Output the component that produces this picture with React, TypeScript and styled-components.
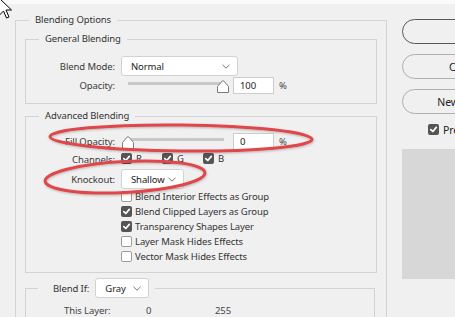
import React from 'react'
import styled, { createGlobalStyle } from 'styled-components'

const GlobalStyle = createGlobalStyle`
    html, body {
        margin: 0;
        padding: 0;
        background: #f0f0f0;
    }
    body {
        font-family: "Noto Sans", "Open Sans", sans-serif;
        font-size: 9.5px;
        letter-spacing: -0.1px;
        color: #303030;
        overflow: hidden;
    }
`

const Checkbox = ({ checked }: { checked?: boolean }) => (
    <Box checked={checked}>
        {checked && (
            <svg width="9" height="9" viewBox="0 0 9 9">
                <path d="M1.8 4.6 L3.8 6.5 L7.3 2.4" fill="none" stroke="#fff" strokeWidth="1.7" strokeLinecap="round" strokeLinejoin="round" />
            </svg>
        )}
    </Box>
)

const Chevron = () => (
    <svg width="8" height="5" viewBox="0 0 8 5">
        <path d="M0.5 0.8 L4 4.2 L7.5 0.8" fill="none" stroke="#777" strokeWidth="1" />
    </svg>
)

const Dropdown = ({ value, width }: { value: string; width: number }) => (
    <Select width={width}>
        <span>{value}</span>
        <Chevron />
    </Select>
)

const Slider = ({ value }: { value: number }) => (
    <SliderField>
        <SliderWrap>
            <Track />
            <Thumb style={{ left: 1 + value * 0.95 }} width="12" height="13" viewBox="0 0 12 13">
                <path d="M0.5 12.5 V6.5 L5.2 1 Q6 0.3 6.8 1 L11.5 6.5 V12.5 Z" fill="#fff" stroke="#7a7a7a" strokeWidth="1" />
            </Thumb>
        </SliderWrap>
        <NumberBox>{value}</NumberBox>
        <Unit>%</Unit>
    </SliderField>
)

const BlendingOptions: React.FC = () => {
    const toggles = [
        { label: 'Blend Interior Effects as Group', checked: false },
        { label: 'Blend Clipped Layers as Group', checked: true },
        { label: 'Transparency Shapes Layer', checked: true },
        { label: 'Layer Mask Hides Effects', checked: false },
        { label: 'Vector Mask Hides Effects', checked: false },
    ]

    return (
        <Page>
            <GlobalStyle />
            <TitleStrip />
            <Main>
                <Options>
                    <OuterLegend>Blending Options</OuterLegend>

                    <Group>
                        <GroupLegend>General Blending</GroupLegend>
                        <FormGrid top={9} bottom={9}>
                            <Label>Blend Mode:</Label>
                            <Dropdown value="Normal" width={117} />
                            <Label>Opacity:</Label>
                            <Slider value={100} />
                        </FormGrid>
                    </Group>

                    <Group gap={4}>
                        <GroupLegend>Advanced Blending</GroupLegend>
                        <FormGrid top={9} bottom={8}>
                            <Label>Fill Opacity:</Label>
                            <Slider value={0} />
                            <Label>Channels:</Label>
                            <Channels>
                                {['R', 'G', 'B'].map(c => (
                                    <Channel key={c}>
                                        <Checkbox checked />
                                        <span>{c}</span>
                                    </Channel>
                                ))}
                            </Channels>
                            <Label>Knockout:</Label>
                            <Dropdown value="Shallow" width={63} />
                            <ToggleList>
                                {toggles.map(t => (
                                    <ToggleRow key={t.label}>
                                        <Checkbox checked={t.checked} />
                                        <span>{t.label}</span>
                                    </ToggleRow>
                                ))}
                            </ToggleList>
                        </FormGrid>
                    </Group>

                    <Group gap={5} narrow>
                        <BlendIfLegend>
                            <span>Blend If:</span>
                            <Dropdown value="Gray" width={54} />
                        </BlendIfLegend>
                        <LayerRow>
                            <LayerLabel>This Layer:</LayerLabel>
                            <LayerValue>0</LayerValue>
                            <span>255</span>
                        </LayerRow>
                    </Group>
                </Options>

                <Side>
                    <PillButton primary>OK</PillButton>
                    <PillButton>Cancel</PillButton>
                    <PillButton>New Style...</PillButton>
                    <PreviewToggle>
                        <Checkbox checked />
                        <span>Preview</span>
                    </PreviewToggle>
                    <PreviewBox />
                </Side>
            </Main>

            <Marks width="455" height="317" viewBox="0 0 455 317">
                <defs>
                    <filter id="soft" x="-10%" y="-50%" width="120%" height="200%">
                        <feDropShadow dx="0.5" dy="1" stdDeviation="1" floodColor="#000" floodOpacity="0.25" />
                    </filter>
                </defs>
                <g filter="url(#soft)" fill="none" stroke="#e0474b" strokeWidth="3">
                    <ellipse cx="181" cy="138" rx="131" ry="13" transform="rotate(0.6 181 138)" />
                    <ellipse cx="125" cy="177" rx="80" ry="15.5" transform="rotate(-3 125 177)" />
                </g>
            </Marks>

            <Cursor width="16" height="24" viewBox="0 0 16 24">
                <path d="M0.5 0.5 V17 L4.5 13 L7.5 20 L10 19 L7 12 H12.5 Z" fill="#fff" stroke="#000" strokeWidth="1" strokeLinejoin="miter" />
            </Cursor>
        </Page>
    )
}

const Page = styled.div`
    position: relative;
    width: 455px;
    height: 317px;
    overflow: hidden;
`

const TitleStrip = styled.div`
    height: 4px;
    background: #fafafa;
`

const Main = styled.div`
    display: flex;
    gap: 15px;
    padding: 8px 0 0 15px;
`

const Options = styled.fieldset`
    width: 352px;
    min-height: 400px;
    flex-shrink: 0;
    margin: 0;
    padding: 3px 9px 0;
    border: 1px solid #d3d3d3;
`

const OuterLegend = styled.legend`
    margin-left: 4px;
    padding: 0 6px;
    line-height: 16px;
    color: #333;
`

const Group = styled.fieldset<{ gap?: number; narrow?: boolean }>`
    margin: ${p => p.gap || 0}px ${p => (p.narrow ? 2 : 0)}px 0 0;
    padding: 0;
    border: 1px solid #d3d3d3;
`

const GroupLegend = styled.legend`
    margin-left: 13px;
    padding: 0 6px;
    line-height: 16px;
    color: #333;
`

const FormGrid = styled.div<{ top: number; bottom: number }>`
    display: grid;
    grid-template-columns: 89px 1fr;
    column-gap: 6px;
    align-items: center;
    padding: ${p => p.top}px 0 ${p => p.bottom}px;
`

const Label = styled.div`
    text-align: right;
    color: #3a3a3a;
    line-height: 17px;
`

const Select = styled.div<{ width: number }>`
    width: ${p => p.width}px;
    height: 20px;
    box-sizing: border-box;
    display: flex;
    align-items: center;
    justify-content: space-between;
    padding: 0 7px 0 9px;
    background: #fff;
    border: 1px solid #d2d2d2;
    border-radius: 3px;
    color: #222;
    margin-bottom: 1px;
`

const SliderField = styled.div`
    display: flex;
    align-items: center;
    height: 17px;
`

const SliderWrap = styled.div`
    position: relative;
    width: 108px;
    height: 17px;
    margin-right: 4px;
`

const Track = styled.div`
    margin: 5px 0 0 7px;
    width: 96px;
    height: 3px;
    background: #c9c9c9;
`

const Thumb = styled.svg`
    position: absolute;
    top: 3px;
`

const NumberBox = styled.div`
    width: 41px;
    height: 17px;
    box-sizing: border-box;
    padding-left: 6px;
    line-height: 15px;
    background: #fff;
    border: 1px solid #cdcdcd;
    color: #222;
`

const Unit = styled.span`
    margin-left: 5px;
    color: #444;
`

const Channels = styled.div`
    display: flex;
    height: 17px;
    align-items: center;
    margin-bottom: 2px;
`

const Channel = styled.div`
    width: 41px;
    display: flex;
    align-items: center;
    gap: 4px;
    color: #333;
`

const Box = styled.div<{ checked?: boolean }>`
    width: 11px;
    height: 11px;
    box-sizing: border-box;
    flex-shrink: 0;
    border-radius: 2px;
    display: flex;
    align-items: center;
    justify-content: center;
    background: ${p => (p.checked ? '#555' : '#fff')};
    border: ${p => (p.checked ? 'none' : '1px solid #9c9c9c')};
`

const ToggleList = styled.div`
    grid-column: 2;
    display: flex;
    flex-direction: column;
    margin-top: -1px;
`

const ToggleRow = styled.div`
    height: 15px;
    display: flex;
    align-items: center;
    gap: 3px;
    color: #333;
`

const BlendIfLegend = styled.legend`
    margin-left: 12px;
    padding: 0 6px 0 15px;
    display: flex;
    align-items: center;
    gap: 6px;
    color: #333;
`

const LayerRow = styled.div`
    display: flex;
    align-items: center;
    padding: 5px 0 0 38px;
    color: #444;
`

const LayerLabel = styled.span`
    width: 82px;
`

const LayerValue = styled.span`
    width: 69px;
`

const Side = styled.div`
    display: flex;
    flex-direction: column;
    padding-top: 7px;
`

const PillButton = styled.div<{ primary?: boolean }>`
    width: 126px;
    height: 25px;
    box-sizing: border-box;
    margin-bottom: 10px;
    border-radius: 13px;
    border: 1px solid ${p => (p.primary ? '#5a5a5a' : '#b0b0b0')};
    display: flex;
    align-items: center;
    justify-content: center;
    font-size: 10.5px;
    color: #222;
`

const PreviewToggle = styled.div`
    display: flex;
    align-items: center;
    gap: 4px;
    margin: -1px 0 0 26px;
    height: 13px;
    font-size: 10.5px;
    color: #222;
`

const PreviewBox = styled.div`
    margin-top: 13px;
    width: 70px;
    height: 130px;
    background: #d7d7d7;
`

const Marks = styled.svg`
    position: absolute;
    left: 0;
    top: 0;
    pointer-events: none;
`

const Cursor = styled.svg`
    position: absolute;
    left: -1px;
    top: -2px;
`

export default BlendingOptions
